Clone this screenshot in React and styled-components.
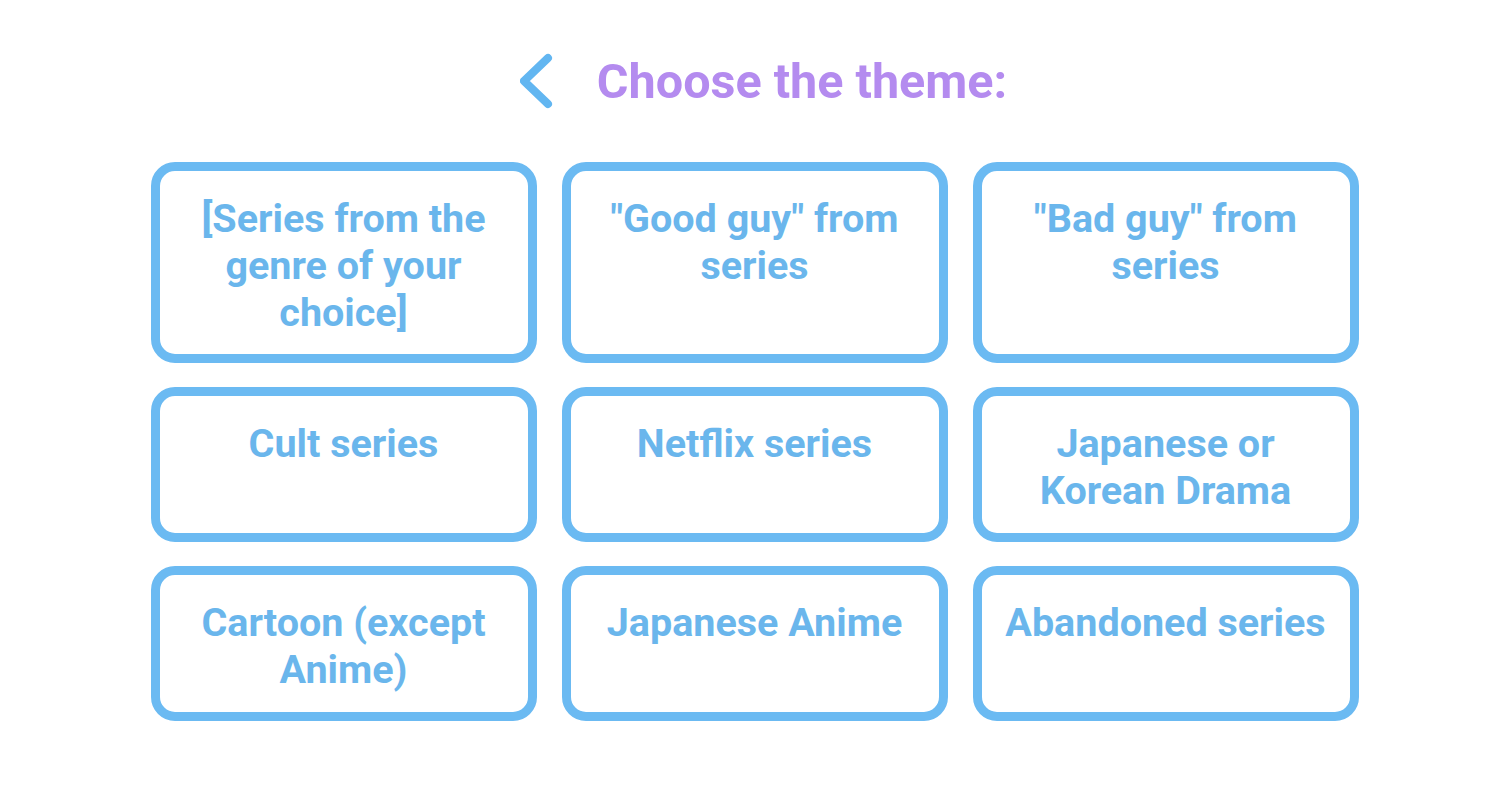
import styled, { createGlobalStyle } from "styled-components"

const GlobalStyle = createGlobalStyle`
  body {
    margin: 0;
    background: #ffffff;
    font-family: Roboto, "Liberation Sans", sans-serif;
  }
`

const Page = styled.div`
  width: 1509px;
  height: 800px;
  display: flex;
  flex-direction: column;
  align-items: center;
  padding-top: 50px;
  box-sizing: border-box;
`

const Header = styled.div`
  display: flex;
  align-items: center;
  gap: 43px;
  margin-left: 18px;
  height: 62px;
`

const BackButton = styled.button`
  border: none;
  background: none;
  padding: 0;
  display: flex;
  cursor: pointer;
`

const Title = styled.h1`
  margin: 0;
  font-size: 48.5px;
  font-weight: 700;
  color: #b48bef;
`

const Grid = styled.div`
  margin-top: 50px;
  display: grid;
  grid-template-columns: repeat(3, 386px);
  column-gap: 25px;
  row-gap: 24px;
`

const ThemeCard = styled.button`
  box-sizing: border-box;
  border: 9px solid #6bbaf2;
  border-radius: 24px;
  background: #fff;
  padding: 24px 10px 18px;
  min-height: ${(p) => p.$tall ? "201px" : "155px"};
  font-family: Roboto, "Liberation Sans", sans-serif;
  font-size: 39.5px;
  font-weight: 700;
  line-height: 47px;
  color: #6ab6ec;
  text-align: center;
  display: flex;
  justify-content: center;
  align-items: flex-start;
  cursor: pointer;
`

const themes = [
  ["[Series from the genre of your choice]", "\"Good guy\" from series", "\"Bad guy\" from series"],
  ["Cult series", "Netflix series", "Japanese or Korean Drama"],
  ["Cartoon (except Anime)", "Japanese Anime", "Abandoned series"],
]

const breaks = {
  "[Series from the genre of your choice]": ["[Series from the", "genre of your", "choice]"],
  "\"Good guy\" from series": ["\"Good guy\" from", "series"],
  "\"Bad guy\" from series": ["\"Bad guy\" from", "series"],
  "Japanese or Korean Drama": ["Japanese or", "Korean Drama"],
  "Cartoon (except Anime)": ["Cartoon (except", "Anime)"],
}

const App = () => {
  return (
    <>
      <GlobalStyle />
      <Page>
        <Header>
          <BackButton aria-label="Back">
            <svg width="34" height="58" viewBox="0 0 34 58">
              <path d="M28 6 L4 29 L28 52" fill="none" stroke="#62b6f1" strokeWidth="8" strokeLinecap="round" strokeLinejoin="round" />
            </svg>
          </BackButton>
          <Title>Choose the theme:</Title>
        </Header>
        <Grid>
          {themes.map((row, i) =>
            row.map((t) => (
              <ThemeCard key={t} $tall={i === 0}>
                <span>
                  {(breaks[t] || [t]).map((line, k) => (
                    <div key={k}>{line}</div>
                  ))}
                </span>
              </ThemeCard>
            ))
          )}
        </Grid>
      </Page>
    </>
  )
}

export default App
